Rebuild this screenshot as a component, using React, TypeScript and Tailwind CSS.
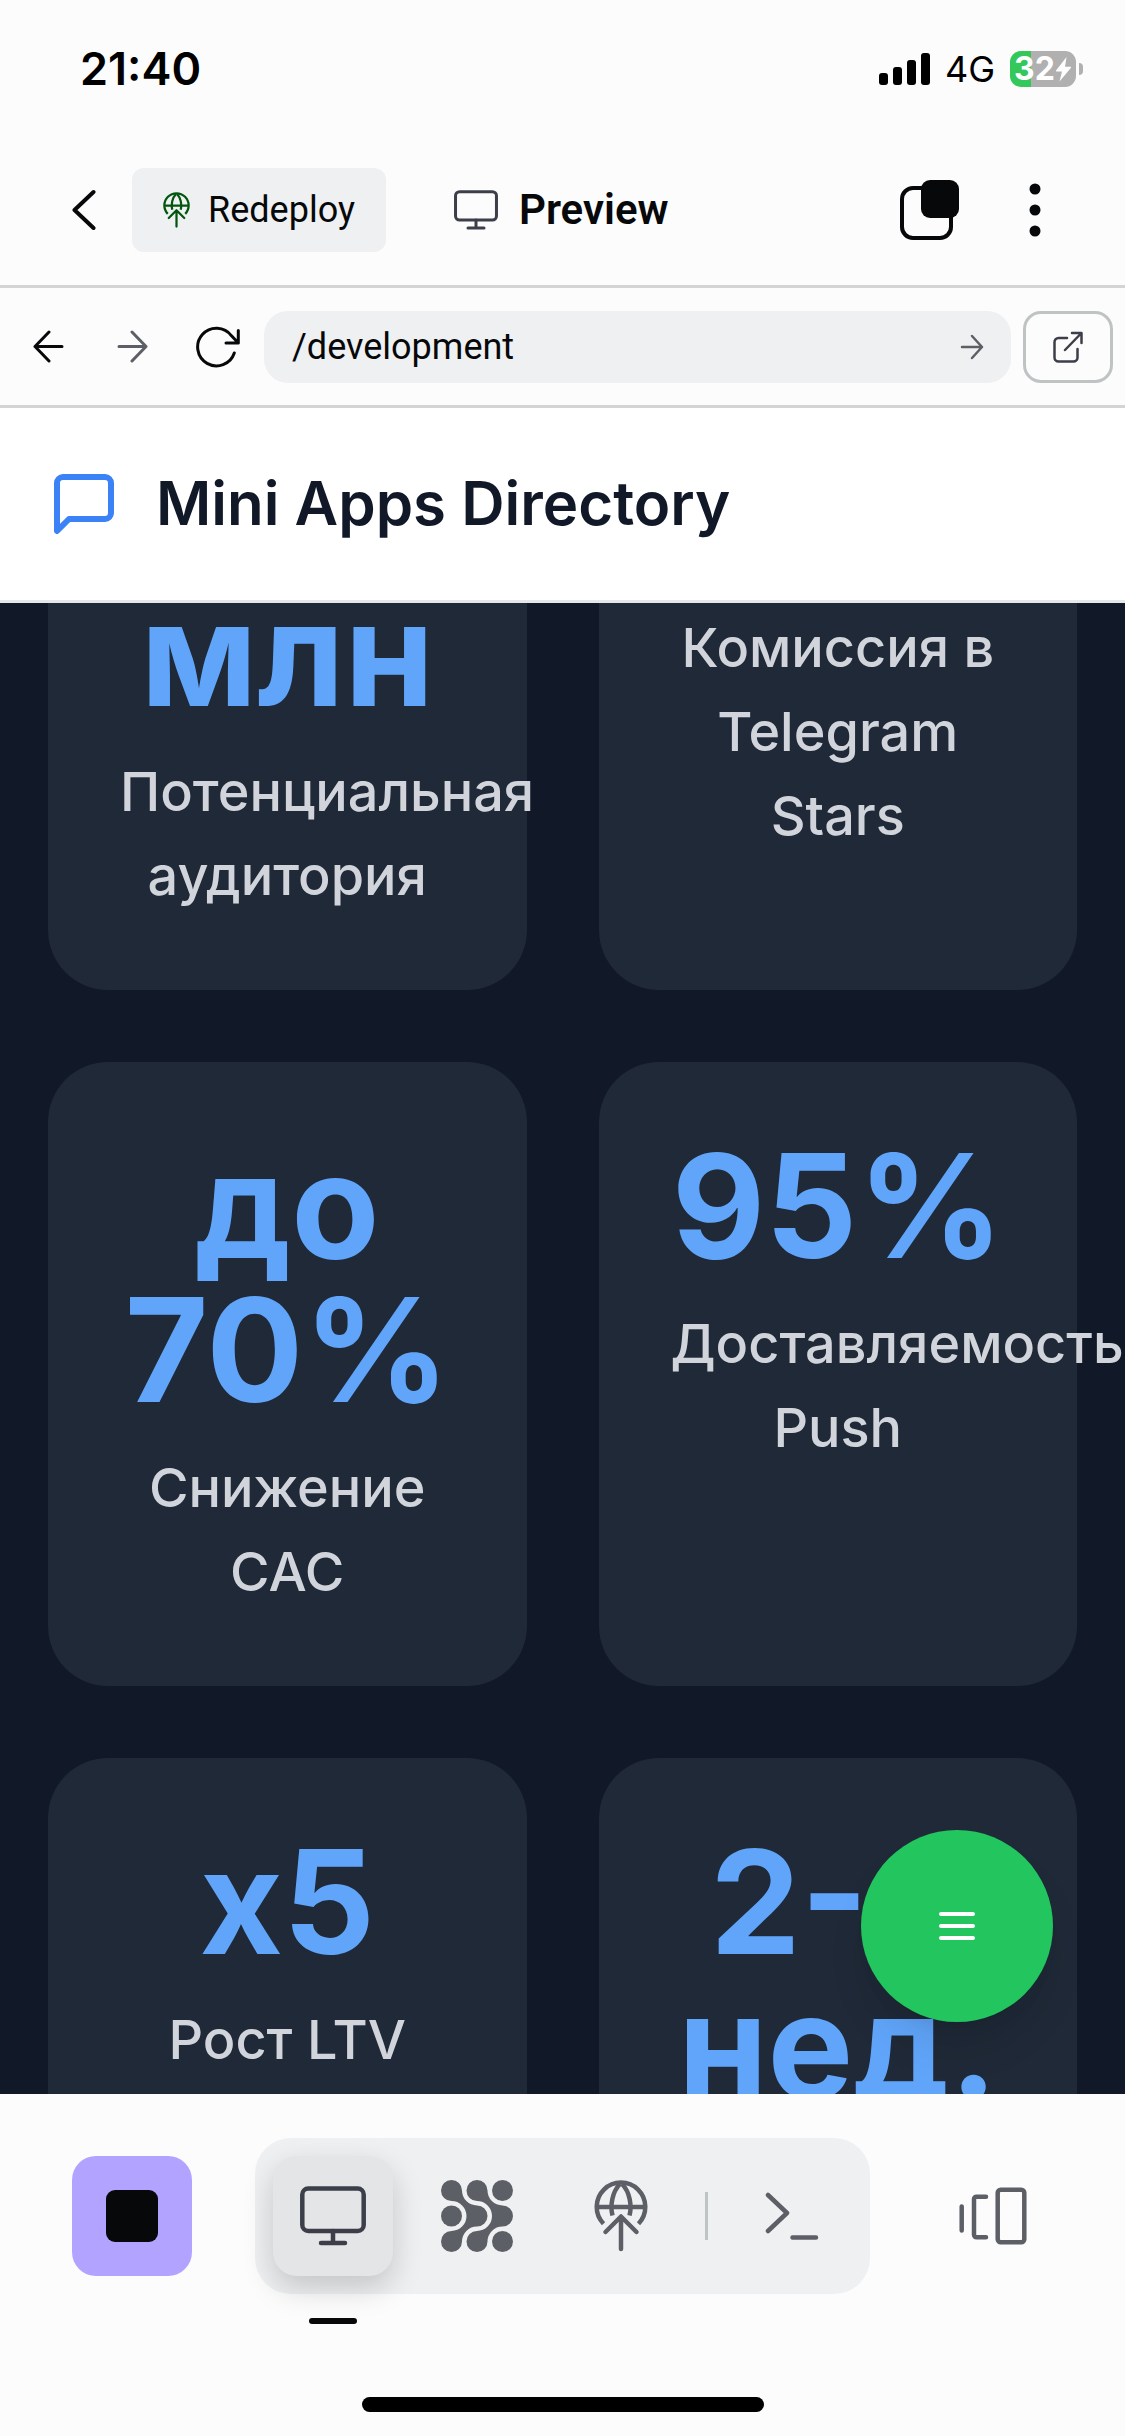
import React from "react";

type IconProps = { className?: string };

function Svg({ w, h, children, className = "" }: { w: number; h: number; children: React.ReactNode; className?: string }) {
  return (
    <svg width={w} height={h} viewBox={`0 0 ${w} ${h}`} fill="none" stroke="currentColor" strokeLinecap="round" strokeLinejoin="round" className={`shrink-0 ${className}`} aria-hidden="true">
      {children}
    </svg>
  );
}

function GlobeUp({ className = "" }: IconProps) {
  return (
    <svg viewBox="0 0 54 72" fill="none" stroke="currentColor" strokeWidth="4.5" strokeLinecap="round" strokeLinejoin="round" className={`shrink-0 ${className}`} aria-hidden="true">
      <path strokeLinecap="butt" d="M9.500 43.700A24.300 24.300 0 1 1 44.500 43.700" />
      <path strokeLinecap="butt" d="M3 27H51M26 4C18 12 16 26 18.500 35.500M28 4C36 12 38 26 35.500 35.500" />
      <path d="M27 37V69M11.500 52L27 36.500L42.500 52" />
    </svg>
  );
}

function Monitor({ className = "" }: IconProps) {
  return (
    <svg viewBox="0 0 66 60" fill="none" stroke="currentColor" strokeWidth="4.500" strokeLinecap="round" strokeLinejoin="round" className={`shrink-0 ${className}`} aria-hidden="true">
      <rect x="2.300" y="2.500" width="61.400" height="42.500" rx="6" />
      <path d="M33 45V56M21 57H45" />
    </svg>
  );
}

function AgentGrid() {
  const wave =
    "M21 10.500A15 15 0 0 0 36 25.500A10.500 10.500 0 0 1 36 46.500A15 15 0 0 0 21 61.500A10.500 10.500 0 1 1 10.500 51A15 15 0 0 0 10.500 21A10.500 10.500 0 1 1 21 10.500Z";
  return (
    <svg width="72" height="72" viewBox="0 0 72 72" fill="currentColor" aria-hidden="true">
      <path d={wave} />
      <path d={wave} transform="translate(25.500 0)" />
      <circle cx="61.500" cy="10.500" r="10.500" />
      <circle cx="10.500" cy="36" r="10.500" />
      <circle cx="61.500" cy="61.500" r="10.500" />
    </svg>
  );
}

function StatusBar() {
  return (
    <div className="flex h-[138px] items-center justify-between pr-[42px] pl-20 font-['Inter'] text-black">
      <time className="text-[45px] font-semibold">21:40</time>
      <div className="flex items-center gap-[15px]">
        <svg width="51" height="32" viewBox="0 0 51 32" fill="currentColor" aria-label="Signal" role="img">
          <rect x="0" y="20" width="9" height="12" rx="3" />
          <rect x="14" y="14" width="9" height="18" rx="3" />
          <rect x="28" y="7" width="9" height="25" rx="3" />
          <rect x="42" y="0" width="9" height="32" rx="3" />
        </svg>
        <span className="text-[36px]">4G</span>
        <div className="flex items-center gap-[3px]">
          <div className="flex h-9 w-[66px] items-center justify-center rounded-[11px] bg-linear-to-r from-[#34c759] from-32% to-[#b0b0b0] to-32% text-white">
            <span className="text-[32px] leading-9 font-bold">32</span>
            <svg width="17" height="25" viewBox="0 0 17 25" fill="currentColor" aria-hidden="true">
              <path d="M11.500 0L1 13.500Q.5 14.500 1.500 14.500H7L4.500 24.500L16 10.800Q16.500 9.800 15.500 9.800H10Z" />
            </svg>
          </div>
          <div className="h-3 w-1 rounded-r-full bg-[#b0b0b0]" />
        </div>
      </div>
    </div>
  );
}

function Toolbar() {
  return (
    <header className="flex h-[150px] items-center border-b-[3px] border-[#d4d4d4] pr-[77px] pb-1 pl-[72px]">
      <button aria-label="Back" className="mr-9">
        <Svg w={24} h={42}>
          <path strokeWidth="4" d="M21.500 3L2.500 21L21.500 39" />
        </Svg>
      </button>
      <button className="flex h-[84px] items-center gap-[18px] rounded-xl bg-[#eff0f2] px-[31px] text-[36px]">
        <GlobeUp className="h-9 w-[27px] text-[#04560f]" />
        Redeploy
      </button>
      <h1 className="ml-[68px] flex items-center gap-[21px] text-[42px] font-semibold">
        <Monitor className="h-10 w-11 text-[#3c3f4a]" />
        Preview
      </h1>
      <button aria-label="Switch tab" className="mr-[62px] ml-auto">
        <Svg w={60} h={60}>
          <rect x="2" y="8" width="49" height="50" rx="11" strokeWidth="4" />
          <rect x="21" y="0" width="38" height="38" rx="9" fill="currentColor" stroke="none" />
        </Svg>
      </button>
      <button aria-label="More" className="px-[7px]">
        <svg width="12" height="54" viewBox="0 0 12 54" fill="currentColor" aria-hidden="true">
          <circle cx="6" cy="6" r="5.500" />
          <circle cx="6" cy="27" r="5.500" />
          <circle cx="6" cy="48" r="5.500" />
        </svg>
      </button>
    </header>
  );
}

function AddressBar() {
  return (
    <nav className="flex h-[120px] items-center border-b-[3px] border-[#d4d4d4] pr-3 pl-[33px]">
      <button aria-label="Go back" className="mr-[53px]">
        <Svg w={31} h={33}>
          <path strokeWidth="3" d="M29 16.500H2M16 2L2 16.500L16 31" />
        </Svg>
      </button>
      <button aria-label="Go forward" className="mr-12 text-[#5d5f67]">
        <Svg w={31} h={33}>
          <path strokeWidth="3" d="M2 16.500H29M15 2L29 16.500L15 31" />
        </Svg>
      </button>
      <button aria-label="Reload" className="mr-6">
        <Svg w={44} h={42}>
          <path strokeWidth="3" d="M38.300 27A18.800 18.800 0 1 1 35.500 9.800L42.300 17M42.300 4.500V17H30" />
        </Svg>
      </button>
      <form className="flex h-[72px] min-w-0 flex-1 items-center rounded-3xl bg-[#eff0f2] pr-[27px] pl-7">
        <input aria-label="Path" defaultValue="/development" className="min-w-0 flex-1 bg-transparent text-[36px] outline-none" />
        <button type="button" aria-label="Go" className="text-[#5d5f67]">
          <Svg w={24} h={26}>
            <path strokeWidth="2.500" d="M2 13H22M12 2L22 13L12 24" />
          </Svg>
        </button>
      </form>
      <button aria-label="Open in new tab" className="ml-3 flex h-[72px] w-[90px] items-center justify-center rounded-[18px] border-[3px] border-[#c0c3c4] text-[#3c3f4a]">
        <Svg w={30} h={32}>
          <path strokeWidth="2.500" d="M14 7H5.500A4 4 0 0 0 1.500 11V26.500A4 4 0 0 0 5.500 30.500H20.500A4 4 0 0 0 24.500 26.500V18M19 2H28.500V12M28 2.500L12 19" />
        </Svg>
      </button>
    </nav>
  );
}

function Value({ children }: { children: React.ReactNode }) {
  return <div className="mb-6 text-[144px] leading-[144px] font-bold text-[#60a5fa]">{children}</div>;
}

function Label({ children }: { children: React.ReactNode }) {
  return <div className="text-[54px] leading-[84px] font-medium text-[#d1d5db]">{children}</div>;
}

const CARD = "min-w-0 rounded-[60px] bg-[#1f2937] p-[72px] text-center";
const CARD_CUT = "min-w-0 rounded-b-[60px] bg-[#1f2937] px-[72px] pb-[72px] text-center";

function Preview() {
  return (
    <main className="relative flex min-h-0 flex-1 flex-col overflow-hidden bg-[#111827] font-['Inter']">
      <div className="z-10 flex h-[195px] shrink-0 items-center gap-9 border-b-[3px] border-[#e5e7eb] bg-white px-12">
        <svg width="72" height="72" viewBox="0 0 24 24" fill="none" stroke="#3b82f6" strokeWidth="2" strokeLinecap="round" strokeLinejoin="round" aria-hidden="true">
          <path d="M21 15a2 2 0 0 1-2 2H7l-4 4V5a2 2 0 0 1 2-2h14a2 2 0 0 1 2 2z" />
        </svg>
        <h2 className="pb-0.5 text-[60px] leading-[84px] font-semibold text-[#111827]">Mini Apps Directory</h2>
      </div>
      <section className="-mt-[21px] grid shrink-0 grid-cols-2 gap-[72px] px-12">
        <article className={CARD_CUT}>
          <Value>млн</Value>
          <Label>Потенциальная аудитория</Label>
        </article>
        <article className={`${CARD_CUT} pt-6`}>
          <Label>Комиссия в Telegram Stars</Label>
        </article>
        <article className={CARD}>
          <Value>до 70%</Value>
          <Label>Снижение CAC</Label>
        </article>
        <article className={CARD}>
          <Value>95%</Value>
          <Label>Доставляемость Push</Label>
        </article>
        <article className={CARD}>
          <Value>x5</Value>
          <Label>Рост LTV</Label>
        </article>
        <article className={CARD}>
          <Value>2-4 нед.</Value>
        </article>
      </section>
      <button aria-label="Menu" className="absolute right-[72px] bottom-[72px] flex size-48 items-center justify-center rounded-full bg-[#22c55e] text-white shadow-[0_30px_45px_-9px_rgba(0,0,0,0.1),0_12px_18px_-12px_rgba(0,0,0,0.1)]">
        <svg width="48" height="48" viewBox="0 0 24 24" fill="none" stroke="currentColor" strokeWidth="2" strokeLinecap="round" aria-hidden="true">
          <path d="M4 6h16M4 12h16M4 18h16" />
        </svg>
      </button>
    </main>
  );
}

function Dock() {
  return (
    <footer className="h-[342px] pt-11">
      <div className="flex items-center pr-[72px] pl-[72px]">
        <button aria-label="Stop" className="flex size-[120px] items-center justify-center rounded-3xl bg-[#b1a3ff]">
          <span className="size-[52px] rounded-[9px] bg-[#07080a]" />
        </button>
        <div className="ml-[63px] flex h-[156px] items-center gap-6 rounded-[36px] bg-[#eff0f2] px-[18px] text-[#5d5f67]">
          <button aria-label="Preview" className="relative flex size-[120px] items-center justify-center rounded-3xl bg-[#e4e5e7] text-[#3c3f4a] shadow-[0_12px_30px_rgba(0,0,0,0.18)]">
            <Monitor className="h-[60px] w-[66px]" />
            <span className="absolute -bottom-12 h-1.5 w-12 rounded-full bg-[#07080a]" />
          </button>
          <button aria-label="Agent" className="flex size-[120px] items-center justify-center">
            <AgentGrid />
          </button>
          <button aria-label="Deploy" className="flex size-[120px] items-center justify-center">
            <GlobeUp className="h-[72px] w-[54px]" />
          </button>
          <div className="h-12 w-[3px] bg-[#c0c3c4]" />
          <button aria-label="Shell" className="flex size-[120px] items-center justify-center">
            <Svg w={54} h={48}>
              <path strokeWidth="4.500" d="M3 3L22 21L3 39M27.500 45.500H51" />
            </Svg>
          </button>
        </div>
        <button aria-label="Tabs" className="mr-[26px] ml-auto text-[#5d5f67]">
          <Svg w={68} h={60}>
            <path strokeWidth="4.500" d="M2.700 20.500V44.500M27 10.700H17.500A2.500 2.500 0 0 0 15 13.200V48.800A2.500 2.500 0 0 0 17.500 51.300H27" />
            <rect x="38.700" y="3.700" width="26.600" height="52.600" rx="3" strokeWidth="4.500" />
          </Svg>
        </button>
      </div>
      <div className="mx-auto mt-[103px] h-[15px] w-[402px] rounded-full bg-black" />
    </footer>
  );
}

export default function App() {
  return (
    <div className="flex h-screen flex-col bg-[#fcfcfc] font-['Roboto'] text-[#07080a]">
      <StatusBar />
      <Toolbar />
      <AddressBar />
      <Preview />
      <Dock />
    </div>
  );
}
